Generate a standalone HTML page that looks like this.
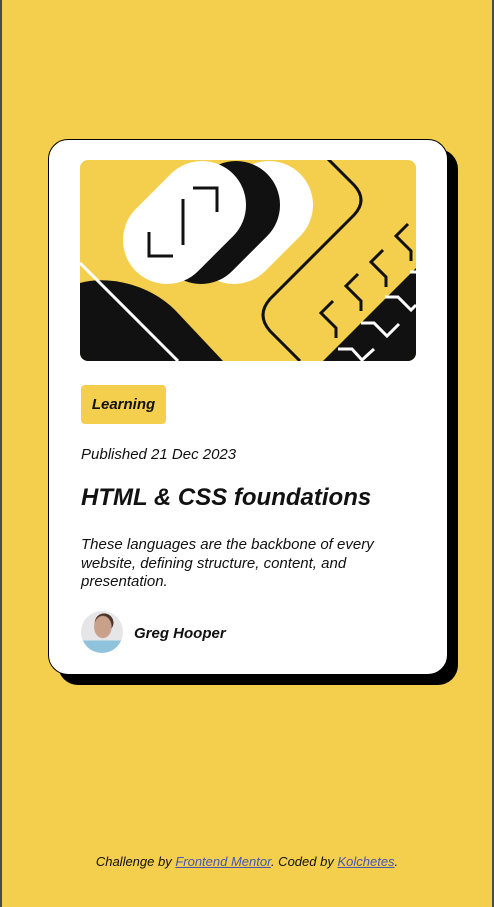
<!DOCTYPE html>
<html><head><meta charset="utf-8"><style>
html,body{margin:0;padding:0}
body{width:494px;height:907px;background:#f4cf4e;position:relative;overflow:hidden;font-family:"Liberation Sans",sans-serif;font-style:italic;color:#111}
.edgeL{position:absolute;left:0;top:0;width:2px;height:907px;background:#4a4a4a}
.edgeR{position:absolute;right:0;top:0;width:2px;height:907px;background:#4a4a4a}
.shadow{position:absolute;left:58px;top:149px;width:400px;height:536px;background:#000;border-radius:20px}
.card{position:absolute;left:48px;top:139px;width:398px;height:534px;background:#fff;border:1px solid #000;border-radius:20px}
.img{position:absolute;left:31px;top:20px;width:336px;height:201px;border-radius:8px;overflow:hidden;background:#f4cf4e}
.tag{position:absolute;left:32px;top:245px;width:85px;height:39px;background:#f4cf4e;border-radius:4px;font-weight:bold;font-size:15px;line-height:39px;text-align:center}
.pub{position:absolute;left:32px;top:306px;font-size:15px}
h1{position:absolute;left:32px;top:344px;margin:0;font-size:24px;font-weight:bold}
.desc{position:absolute;left:32px;top:396px;width:330px;font-size:15px;line-height:18.5px}
.av{position:absolute;left:32px;top:471px;width:42px;height:42px;border-radius:50%;background:radial-gradient(ellipse 22% 28% at 52% 38%,#c9a08a 0 90%,transparent 100%),radial-gradient(circle at 55% 28%,#4a3326 0 24%,transparent 25%),linear-gradient(#e6e6e8 0 70%,#8fc3dc 70%)}
.name{position:absolute;left:85px;top:485px;font-size:15px;font-weight:bold}
.foot{position:absolute;left:0;width:494px;top:854px;text-align:center;font-size:13px}
.foot a{color:#4656b4;text-decoration:underline}
</style></head><body>
<div class="edgeL"></div><div class="edgeR"></div>
<div class="shadow"></div>
<div class="card">
<div class="img"><svg width="336" height="201" viewBox="0 0 336 201">
<g stroke-linecap="round">
<line x1="154" y1="80" x2="189" y2="45" stroke="#fff" stroke-width="88"/>
<line x1="121" y1="80" x2="156" y2="45" stroke="#111" stroke-width="88"/>
<line x1="87" y1="80" x2="122" y2="45" stroke="#fff" stroke-width="88"/>
</g>
<g stroke="#111" stroke-width="3" fill="none">
<path d="M113,28 L137,28 L137,52"/><path d="M103,39 L103,85"/><path d="M69,72 L69,96 L93,96"/>
</g>
<path d="M0,123 C30,115 70,125 95,150 L143,201 L0,201Z" fill="#111"/>
<path d="M0,103 L98,201" stroke="#fff" stroke-width="3"/>
<path d="M247,-2 L274,25 Q288,40 274,55 L190,139 Q176,155 190,171 L220,201" stroke="#111" stroke-width="3" fill="none"/>
<path d="M243,201 L336,108 L336,201Z" fill="#111"/>
<g stroke="#111" stroke-width="3" fill="none">
<path d="M253,141 L241,153 L256,168 L256,178"/>
<path d="M278,114 L266,126 L281,141 L281,151"/>
<path d="M303,90 L291,102 L306,117 L306,127"/>
<path d="M328,64 L316,76 L331,91 L331,101"/>
</g>
<g stroke="#fff" stroke-width="3" fill="none">
<path d="M258,189 L272,189 L282,200 L294,189"/>
<path d="M281,163 L294,163 L307,176 L319,164"/>
<path d="M305,137 L318,137 L331,150 L336,145"/>
<path d="M330,112 L336,112"/>
</g>
</svg></div>
<div class="tag">Learning</div>
<div class="pub">Published 21 Dec 2023</div>
<h1>HTML &amp; CSS foundations</h1>
<div class="desc">These languages are the backbone of every website, defining structure, content, and presentation.</div>
<div class="av"></div>
<div class="name">Greg Hooper</div>
</div>
<div class="foot">Challenge by <a>Frontend Mentor</a>. Coded by <a>Kolchetes</a>.</div>
</body></html>
